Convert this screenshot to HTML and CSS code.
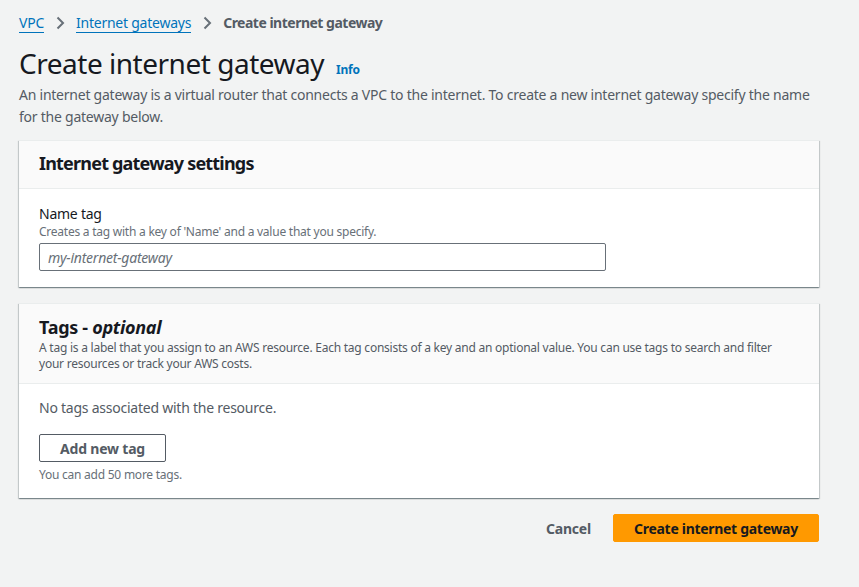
FILE: index.html
```html
<!DOCTYPE html>
<html>
<head>
<meta charset="utf-8">
<link rel="stylesheet" href="styles.css">
</head>
<body>
<div class="page">
  <nav class="crumbs">
    <a class="crumb-link" href="#">VPC</a>
    <svg class="chev" width="16" height="16" viewBox="0 0 16 16"><path d="M5.5 2.5 11 8l-5.5 5.5" fill="none" stroke="#687078" stroke-width="2"/></svg>
    <a class="crumb-link" href="#">Internet gateways</a>
    <svg class="chev" width="16" height="16" viewBox="0 0 16 16"><path d="M5.5 2.5 11 8l-5.5 5.5" fill="none" stroke="#687078" stroke-width="2"/></svg>
    <span class="crumb-current">Create internet gateway</span>
  </nav>
  <div class="title-row">
    <h1 class="title">Create internet gateway</h1>
    <a class="info" href="#">Info</a>
  </div>
  <p class="desc">An internet gateway is a virtual router that connects a VPC to the internet. To create a new internet gateway specify the name for the gateway below.</p>

  <section class="card">
    <div class="card-head">
      <h2 class="card-title">Internet gateway settings</h2>
    </div>
    <div class="card-body">
      <div class="label">Name tag</div>
      <div class="hint">Creates a tag with a key of 'Name' and a value that you specify.</div>
      <input class="input" type="text" placeholder="my-internet-gateway">
    </div>
  </section>

  <section class="card">
    <div class="card-head tags-head">
      <h2 class="card-title">Tags - <i>optional</i></h2>
      <div class="head-desc">A tag is a label that you assign to an AWS resource. Each tag consists of a key and an optional value. You can use tags to search and filter your resources or track your AWS costs.</div>
    </div>
    <div class="card-body tags-body">
      <div class="empty">No tags associated with the resource.</div>
      <button class="btn-normal">Add new tag</button>
      <div class="hint small">You can add 50 more tags.</div>
    </div>
  </section>

  <div class="actions">
    <button class="btn-link">Cancel</button>
    <button class="btn-primary">Create internet gateway</button>
  </div>
</div>
</body>
</html>
```

FILE: styles.css
```css
* { box-sizing: border-box; }
html, body { margin: 0; padding: 0; }
body {
  background: #f2f3f3;
  font-family: "Noto Sans", "Open Sans", sans-serif;
  color: #16191f;
  letter-spacing: -0.015em;
}
.page {
  width: 800px;
  margin-left: 19px;
  padding-top: 12px;
}
.crumbs {
  display: flex;
  align-items: center;
  gap: 8px;
  font-size: 14px;
  line-height: 22px;
}
.crumb-link {
  color: #0073bb;
  text-decoration: none;
  border-bottom: 1px solid #0073bb;
  line-height: 18px;
}
.chev { display: block; }
.crumb-current {
  color: #545b64;
  font-weight: bold;
  letter-spacing: -0.5px;
}
.title-row {
  display: flex;
  align-items: baseline;
  gap: 12px;
  margin-top: 11px;
}
.title {
  margin: 0;
  font-size: 28px;
  font-weight: normal;
  line-height: 36px;
  color: #16191f;
  letter-spacing: -0.48px;
}
.info {
  color: #0073bb;
  font-size: 12px;
  font-weight: bold;
  text-decoration: none;
}
.desc {
  margin: 3px 0 0;
  font-size: 14px;
  line-height: 22px;
  color: #545b64;
}
.card {
  background: #fff;
  margin-top: 12px;
  border-top: 1px solid #eaeded;
  box-shadow: 0 1px 1px 0 rgba(0,28,36,.3), 1px 1px 1px 0 rgba(0,28,36,.15), -1px 1px 1px 0 rgba(0,28,36,.15);
}
.card + .card { margin-top: 16px; }
.card-head {
  background: #fafafa;
  border-bottom: 1px solid #eaeded;
  padding: 10px 20px 12px;
}
.card-title {
  margin: 0;
  font-size: 18px;
  line-height: 25px;
  font-weight: bold;
  color: #16191f;
  letter-spacing: -0.8px;
}
.tags-head { padding-bottom: 11px; }
.tags-head .card-title { line-height: 26px; letter-spacing: -0.3px; }
.head-desc {
  font-size: 12px;
  line-height: 16px;
  color: #545b64;
}
.card-body {
  padding: 14px 20px 16px;
}
.label {
  font-size: 14px;
  line-height: 21px;
  color: #16191f;
}
.hint {
  font-size: 12px;
  line-height: 16px;
  color: #687078;
}
.input {
  display: block;
  margin-top: 3px;
  width: 567px;
  height: 28px;
  border: 1px solid #687078;
  border-radius: 2px;
  padding: 0 8px;
  font-family: inherit;
  font-size: 14px;
  letter-spacing: inherit;
}
.input::placeholder {
  color: #687078;
  font-style: italic;
}
.tags-body { padding-top: 14px; padding-bottom: 15px; }
.empty {
  font-size: 14px;
  line-height: 20px;
  color: #545b64;
}
.btn-normal {
  display: block;
  margin-top: 16px;
  height: 28px;
  width: 127px;
  background: #fff;
  border: 1px solid #545b64;
  border-radius: 2px;
  font-family: inherit;
  font-size: 14px;
  font-weight: bold;
  letter-spacing: -0.2px;
  color: #545b64;
  padding: 0;
}
.small { margin-top: 5px; }
.actions {
  display: flex;
  justify-content: flex-end;
  align-items: center;
  gap: 12px;
  margin-top: 16px;
}
.btn-link {
  background: none;
  border: none;
  font-family: inherit;
  font-size: 14px;
  font-weight: bold;
  color: #545b64;
  padding: 4px 10px;
  letter-spacing: -0.2px;
}
.btn-primary {
  height: 28px;
  width: 206px;
  background: #ff9900;
  border: 1px solid #ff9900;
  border-radius: 2px;
  font-family: inherit;
  font-size: 14px;
  font-weight: bold;
  letter-spacing: -0.3px;
  color: #16191f;
  padding: 0;
}
```
